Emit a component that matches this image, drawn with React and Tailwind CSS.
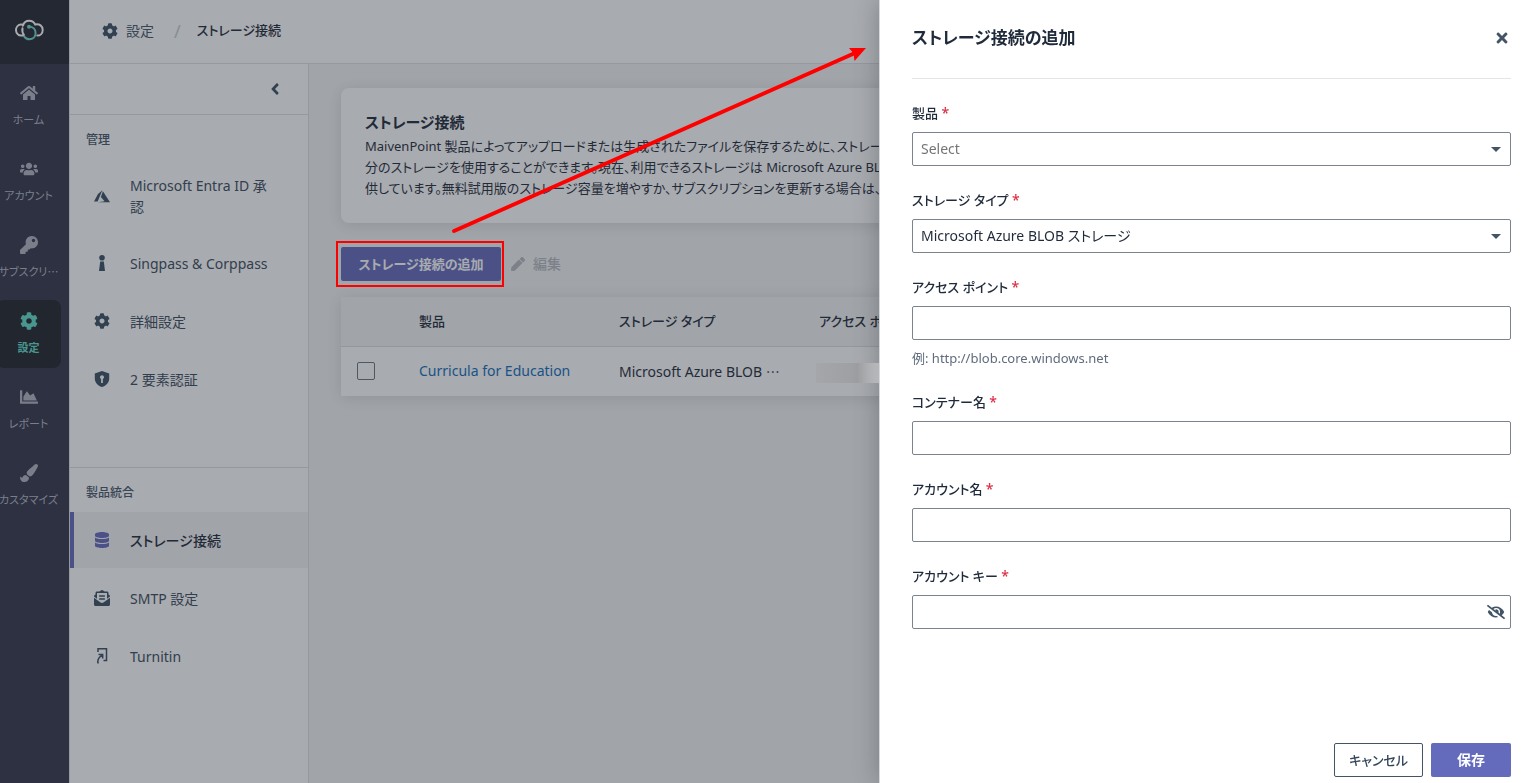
import { useState } from "react";
import {
  FaAngleLeft,
  FaChartArea,
  FaCog,
  FaDatabase,
  FaEnvelopeOpenText,
  FaEyeSlash,
  FaHome,
  FaKey,
  FaPaintBrush,
  FaPen,
  FaTimes,
  FaUsers,
} from "react-icons/fa";

// --- Iconos propios ---
const LogoIcon = () => (
  <svg className="h-6 w-8" viewBox="0 0 32 24" fill="none" strokeWidth="2" strokeLinecap="round">
    <path d="M10.5 17.6H8.2A5.6 5.6 0 0 1 7.600 6.500C8.700 6.300 9.600 6.600 10.300 7M9.800 7.800C10.800 4.400 13.400 2.800 16.200 2.800C18.800 2.800 21 4.200 22.200 6.500C26.500 5.400 29.700 8.200 29.700 11.900C29.700 15.200 27.300 17.600 24.300 17.600M9.500 10.300C8.900 13 9.600 15.200 11 17" stroke="#fff" />
    <path d="M16.200 8.800C20 8.800 22.600 11.400 22.600 15C22.600 18.800 19.800 21.200 16.600 21.200C14.200 21.200 12.300 20.200 11.300 18.600" stroke="#6fd6c6" />
    <circle cx="16" cy="8.800" r="2" fill="#6fd6c6" />
  </svg>
);

const AzureIcon = () => (
  <svg className="h-4 w-4" viewBox="0 0 16 16" fill="currentColor">
    <path d="M8.300 2.200L4 6L0 13.400H3.700ZM8.900 3.200L6.900 9L10.600 13.200L3.900 14.300H16Z" />
  </svg>
);

const SingpassIcon = () => (
  <svg className="h-4 w-4" viewBox="0 0 16 16" fill="currentColor">
    <circle cx="8" cy="2.800" r="2.800" />
    <path d="M6.200 6.500H9.800L11 16H5Z" />
  </svg>
);

const ShieldIcon = () => (
  <svg className="h-4 w-4" viewBox="0 0 16 16" fill="currentColor" fillRule="evenodd">
    <path d="M8 0L15.200 2.600V7.500C15.200 11.500 12.300 14.700 8 16C3.700 14.700.8 11.500.8 7.500V2.600ZM8 4.200A2 2 0 0 0 7.100 8V12H8.900V8A2 2 0 0 0 8 4.200Z" />
  </svg>
);

const TurnitinIcon = () => (
  <svg className="h-4 w-4" viewBox="0 0 16 16" fill="none" stroke="currentColor" strokeWidth="1.500">
    <path d="M4 4V.8H12.500V12.500H9.500M4.300 15.500C2.800 12.500 4 10 8.300 6.800M4.500 6.400H8.700V10.600" />
  </svg>
);

const Caret = () => (
  <svg className="pointer-events-none absolute top-[15px] right-2.5 h-[5px] w-[10px] text-[#425466]" viewBox="0 0 10 5" fill="currentColor">
    <path d="M0 0H10L5 5Z" />
  </svg>
);

// --- Datos ---
const navItems = [
  { label: "ホーム", icon: FaHome },
  { label: "アカウント", icon: FaUsers },
  { label: "サブスクリ⋯", icon: FaKey },
  { label: "設定", icon: FaCog, active: true },
  { label: "レポート", icon: FaChartArea },
  { label: "カスタマイズ", icon: FaPaintBrush },
];

const adminItems = [
  { label: "Microsoft Entra ID 承認", icon: AzureIcon },
  { label: "Singpass & Corppass", icon: SingpassIcon },
  { label: "詳細設定", icon: FaCog },
  { label: "2 要素認証", icon: ShieldIcon },
];

const productItems = [
  { label: "ストレージ接続", icon: FaDatabase, active: true },
  { label: "SMTP 設定", icon: FaEnvelopeOpenText },
  { label: "Turnitin", icon: TurnitinIcon },
];

const MenuGroup = ({ title, items }) => (
  <section>
    <h2 className="h-11 px-4 pt-4 text-xs leading-[18px] font-medium text-[#46546a]">{title}</h2>
    <ul className="flex flex-col gap-0.5">
      {items.map(({ label, icon: Icon, active }) => (
        <li key={label}>
          <a
            href="#"
            className={`flex min-h-14 items-center gap-5 border-l-4 py-4 pr-8 pl-5 leading-[21px] ${active ? "border-[#646abc] bg-[#f4f5f6] font-medium text-[#1f2a3a]" : "border-transparent text-[#3b4a5c]"}`}
          >
            <span className={`shrink-0 ${active ? "text-[#646abc]" : "text-[#3b4f63]"}`}>
              <Icon className="h-4 w-4" />
            </span>
            {label}
          </a>
        </li>
      ))}
    </ul>
  </section>
);

const Field = ({ id, label, hint, children }) => (
  <div>
    <label htmlFor={id} className="mb-2 block text-[13px] leading-[21px] font-medium">
      {label} <span className="text-sm leading-5 text-[#dc2f45]">*</span>
    </label>
    <div className="relative">{children}</div>
    {hint && <p className="mt-2 text-[13px] leading-5 text-[#5f6c7d]">{hint}</p>}
  </div>
);

const inputClass = "block h-[34px] w-full appearance-none rounded-xs border border-[#7b838d] bg-white px-2 outline-none";

// --- Panel lateral con el formulario ---
const AddStorageDrawer = () => {
  const [form, setForm] = useState({
    product: "",
    type: "azure",
    endpoint: "",
    container: "",
    account: "",
    key: "",
  });
  const [showKey, setShowKey] = useState(false);

  const handleChange = (e) => setForm({ ...form, [e.target.id]: e.target.value });

  return (
    <aside className="fixed inset-y-0 right-0 z-30 w-[652px] max-w-full bg-white shadow-[0_0_24px_rgba(0,0,0,0.25)]">
      <form className="flex h-full flex-col border-l border-[#d5d8dc] pr-5 pb-1.5 pl-8" onSubmit={(e) => e.preventDefault()}>
        <div className="flex h-[79px] shrink-0 items-center justify-between border-b border-[#e3e5e8] pb-0.5">
          <h2 className="text-[17px] leading-6 font-bold">ストレージ接続の追加</h2>
          <button type="button" aria-label="閉じる" className="p-px text-[#425466]">
            <FaTimes className="h-4 w-4" />
          </button>
        </div>

        <div className="flex flex-col gap-6 py-6">
          <Field id="product" label="製品">
            <select
              id="product"
              value={form.product}
              onChange={handleChange}
              className={`${inputClass} ${form.product ? "" : "text-[#757575]"}`}
            >
              <option value="">Select</option>
            </select>
            <Caret />
          </Field>
          <Field id="type" label="ストレージ タイプ">
            <select id="type" value={form.type} onChange={handleChange} className={inputClass}>
              <option value="azure">Microsoft Azure BLOB ストレージ</option>
            </select>
            <Caret />
          </Field>
          <Field id="endpoint" label="アクセス ポイント" hint="例: http://blob.core.windows.net">
            <input id="endpoint" type="text" value={form.endpoint} onChange={handleChange} className={inputClass} />
          </Field>
          <Field id="container" label="コンテナー名">
            <input id="container" type="text" value={form.container} onChange={handleChange} className={inputClass} />
          </Field>
          <Field id="account" label="アカウント名">
            <input id="account" type="text" value={form.account} onChange={handleChange} className={inputClass} />
          </Field>
          <Field id="key" label="アカウント キー">
            <input
              id="key"
              type={showKey ? "text" : "password"}
              value={form.key}
              onChange={handleChange}
              className={`${inputClass} pr-9`}
            />
            <button
              type="button"
              aria-label="キーを表示"
              onClick={() => setShowKey(!showKey)}
              className="absolute inset-y-0 right-1.5 text-[#425466]"
            >
              <FaEyeSlash className="h-[18px] w-[18px]" />
            </button>
          </Field>
        </div>

        <div className="mt-auto flex justify-end gap-2">
          <button type="button" className="h-[34px] rounded-xs border border-[#425466] px-3.5 text-[13px] font-medium text-[#33445a]">
            キャンセル
          </button>
          <button type="submit" className="h-[34px] w-20 rounded-xs bg-[#646abc] font-bold text-white">
            保存
          </button>
        </div>
      </form>
    </aside>
  );
};

// --- Componente Principal ---
export default function App() {
  return (
    <div
      lang="ja"
      className="flex h-screen overflow-hidden bg-[#f4f5f6] font-['Noto_Sans','Noto_Sans_CJK_JP',sans-serif] text-sm text-[#1f2a3a] [font-feature-settings:'palt']"
    >
      {/* Navegación principal */}
      <nav className="w-[69px] shrink-0 bg-[#323449]">
        <a href="#" aria-label="MaivenPoint" className="flex h-16 items-center bg-[#23252f] pb-1 pl-[13px]">
          <LogoIcon />
        </a>
        <ul className="-ml-1 flex w-[65px] flex-col gap-2 pt-2">
          {navItems.map(({ label, icon: Icon, active }) => (
            <li key={label}>
              <a
                href="#"
                className={`flex h-[68px] flex-col items-center gap-[9px] rounded-lg pt-3 text-[11px] leading-[18px] whitespace-nowrap ${active ? "bg-[#1f222b] font-bold text-[#62dcc8]" : "text-[#b2b5c3]"}`}
              >
                <Icon className="h-[18px] w-[18px]" />
                {label}
              </a>
            </li>
          ))}
        </ul>
      </nav>

      <div className="flex min-w-0 flex-1 flex-col">
        <header className="flex h-16 shrink-0 items-center border-b border-l border-[#e0e2e5] bg-white px-8 pb-0.5">
          <FaCog className="h-4 w-4 text-[#3b4f63]" />
          <a href="#" className="ml-2 text-[#46546a]">設定</a>
          <span className="mr-4 ml-5 text-lg text-[#c9cdd3]">/</span>
          <span className="text-[13px] font-medium">ストレージ接続</span>
        </header>

        <div className="flex min-h-0 flex-1">
          {/* Menú de configuración */}
          <div className="w-60 shrink-0 border-x border-[#e0e2e5] bg-white">
            <div className="flex h-[51px] items-center justify-end border-b border-[#e0e2e5] pr-6">
              <button type="button" aria-label="折りたたむ" className="text-[#3b4f63]">
                <FaAngleLeft className="h-[18px] w-[18px]" />
              </button>
            </div>
            <div className="border-b border-[#e0e2e5] pb-[60px]">
              <MenuGroup title="管理" items={adminItems} />
            </div>
            <MenuGroup title="製品統合" items={productItems} />
          </div>

          <main className="flex min-w-0 flex-1 flex-col px-8 pt-6">
            <section className="rounded-lg bg-white p-6 shadow-[0_2px_16px_rgba(0,0,0,0.12)]">
              <h1 className="mb-1 text-[15px] leading-5 font-bold">ストレージ接続</h1>
              <p className="overflow-hidden text-[13px] leading-[21px] whitespace-nowrap">
                MaivenPoint 製品によってアップロードまたは生成されたファイルを保存するために、ストレージが
                <br />
                分のストレージを使用することができます。現在、利用できるストレージは Microsoft Azure BLOB
                <br />
                供しています。無料試用版のストレージ容量を増やすか、サブスクリプションを更新する場合は、
              </p>
            </section>

            <div className="mt-6 mb-4 flex items-center gap-2.5">
              <div className="relative">
                <button type="button" className="block h-[34px] w-40 rounded-xs bg-[#646abc] text-[13px] font-bold text-white">
                  ストレージ接続の追加
                </button>
                <span className="pointer-events-none absolute -inset-y-1.5 -right-[3px] -left-[5px] z-20 border-2 border-[#ff0000]" />
              </div>
              <button type="button" disabled className="flex items-center gap-2 font-medium text-[#b6bac0]">
                <FaPen className="h-3.5 w-3.5" />
                編集
              </button>
            </div>

            <table className="w-full table-fixed bg-white text-left shadow-[0_2px_16px_rgba(0,0,0,0.12)]">
              <colgroup>
                <col className="w-[78px]" />
                <col className="w-[200px]" />
                <col className="w-[200px]" />
                <col />
              </colgroup>
              <thead>
                <tr className="h-[49px] border-b border-[#dcdfe2] bg-[#f4f5f6] text-[13px]">
                  <td />
                  <th className="font-medium">製品</th>
                  <th className="font-medium">ストレージ タイプ</th>
                  <th className="font-medium">アクセス ポイント</th>
                </tr>
              </thead>
              <tbody>
                <tr className="h-[50px]">
                  <td className="pl-4">
                    <input
                      type="checkbox"
                      aria-label="Curricula for Education"
                      className="block h-[18px] w-[18px] appearance-none rounded-xs border border-[#6b7480] bg-white"
                    />
                  </td>
                  <td>
                    <a href="#" className="text-[#0f6cbd]">Curricula for Education</a>
                  </td>
                  <td>
                    Microsoft Azure BLOB <span className="font-['Noto_Sans_CJK_JP',sans-serif]">⋯</span>
                  </td>
                  <td className="pt-1">
                    <div className="relative z-20 -ml-[3px] h-5 w-16 bg-linear-to-r from-[#a4a6a9] via-[#9d9fa2] via-65% to-[#d3d4d6]" />
                  </td>
                </tr>
              </tbody>
            </table>
          </main>
        </div>
      </div>

      {/* Capa oscura */}
      <div className="fixed inset-0 z-10 bg-[#262d37]/40" />

      <AddStorageDrawer />

      {/* Flecha del botón al panel */}
      <svg className="pointer-events-none absolute top-[42px] left-[450px] z-40 h-[196px] w-[420px]" viewBox="0 0 420 196">
        <path d="M4 189L405 11" stroke="#ff0000" strokeWidth="4" strokeLinecap="round" />
        <path d="M416 6L404.500 19L403.500 11.500L399 6Z" fill="#ff0000" />
      </svg>
    </div>
  );
}
